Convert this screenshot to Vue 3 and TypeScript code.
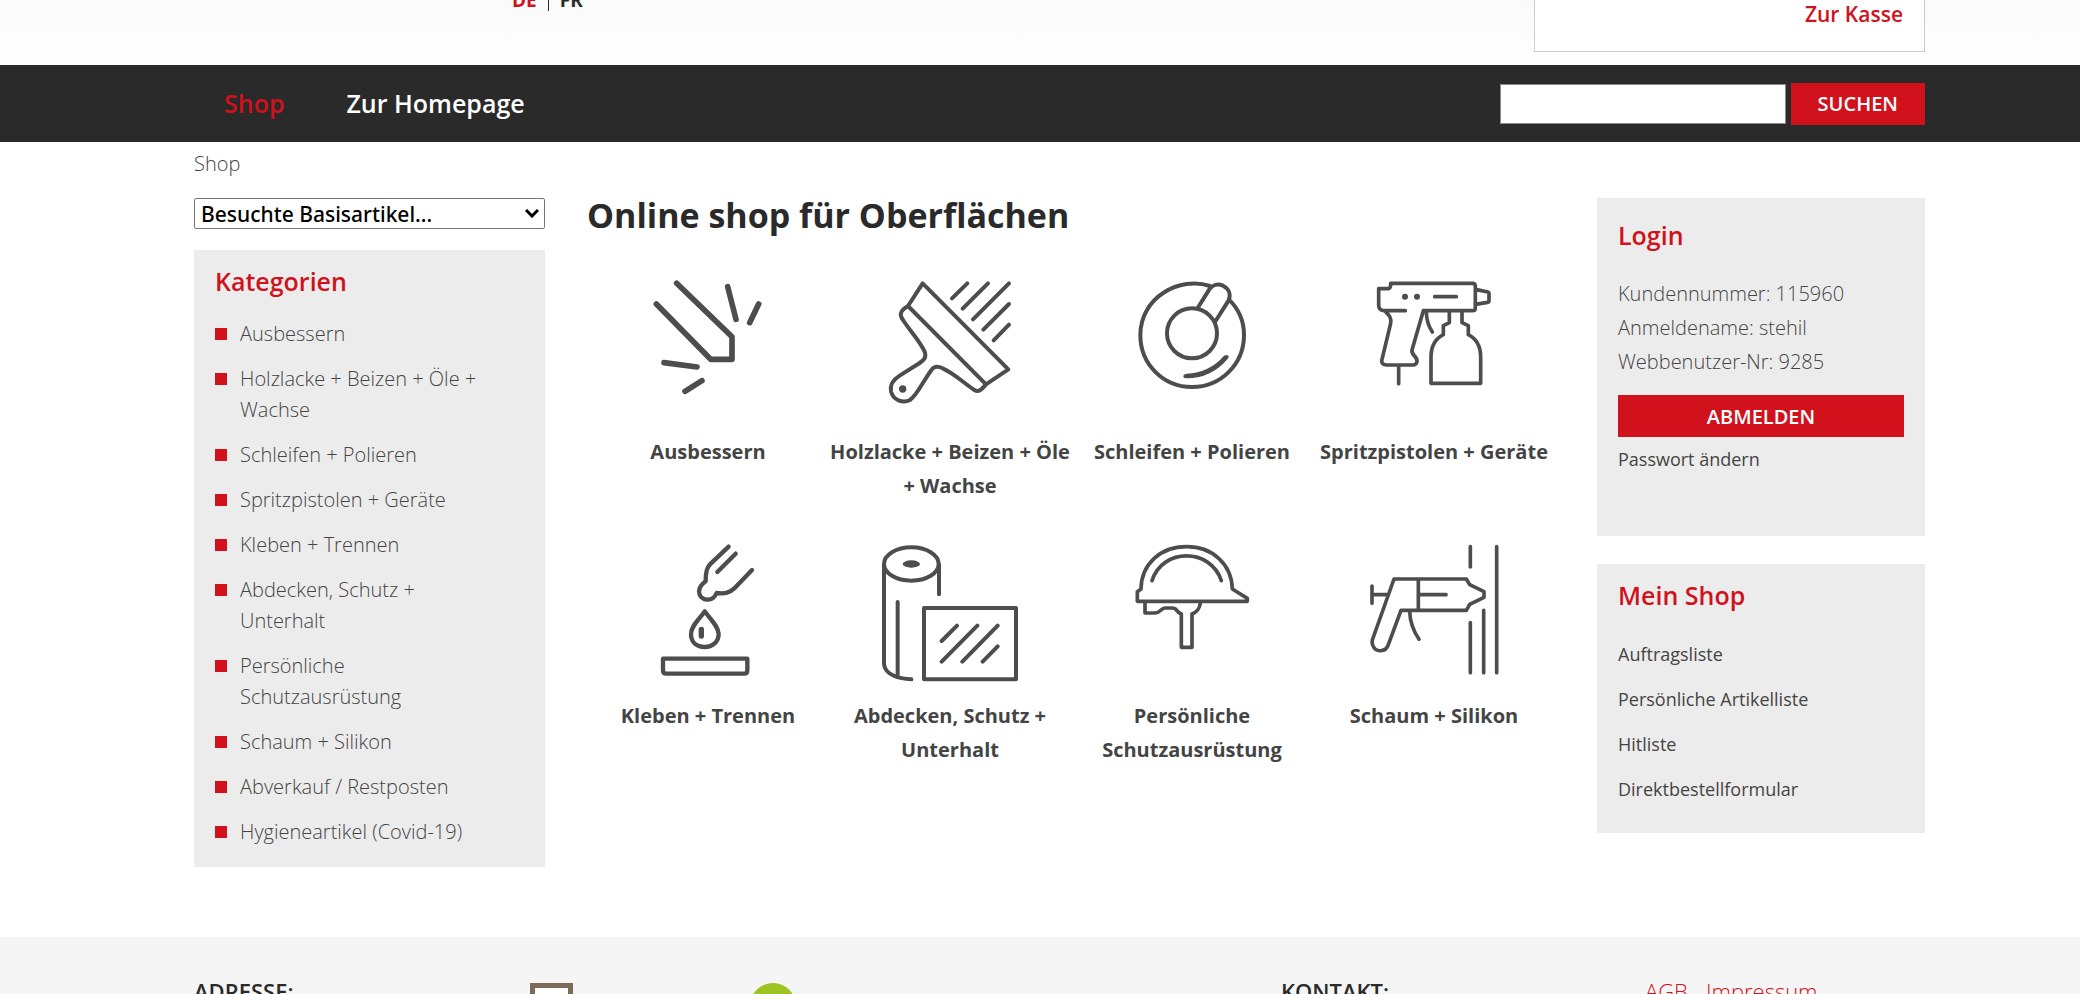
<script setup lang="ts">
import { ref } from 'vue'

interface Category {
  name: string
  viewBox?: string
  width?: number
  lines?: string
  dots?: string
}

const search = ref('')
const visited = ref('')

const categories: Category[] = [
  {
    name: 'Ausbessern',
    viewBox: '168 261 432 432',
    width: 17,
    lines:
      'M290 280L456 440V508H392L229 342M443 290L468 388M536 342L509 398M252 518L351 531M366 572L315 604',
  },
  {
    name: 'Holzlacke + Beizen + Öle + Wachse',
    viewBox: '893 261 432 432',
    width: 12,
    lines:
      'M1027 280L1284 538L1217 583L983 348ZM983 348C964 360 954 370 968 390C990 424 1018 452 1033 485C1039 502 1032 509 1018 519L958 557C934 572 929 588 932 604C938 630 967 641 989 630C1012 614 1030 570 1054 539C1062 528 1075 529 1087 535C1120 549 1150 579 1182 600C1196 609 1206 596 1217 583M1161 280L1115 325M1223 280L1147 356M1286 280L1178 388M1286 342L1209 419M1286 404L1240 451',
    dots: 'M956 597a11 11 0 1 0 22 0a11 11 0 1 0-22 0',
  },
  {
    name: 'Schleifen + Polieren',
    viewBox: '120 51 432 432',
    width: 12,
    lines:
      'M390 78C300 48 181 111 181 225C181 312 249 381 336 381C423 381 492 312 492 225C492 183 477 148 447 119M261 220a75 75 0 1 0 150 0a75 75 0 1 0-150 0M353 144L388 88C397 75 413 70 429 77C447 86 453 103 446 121L405 186M316 349C363 350 407 331 440 291M320 347C364 345 404 329 436 292',
  },
  {
    name: 'Spritzpistolen + Geräte',
    viewBox: '846 51 432 432',
    width: 11,
    lines:
      'M976 152H911Q896 151 896 136V86H925Q933 84 932 70H1178Q1186 70 1186 79V145Q1186 152 1178 152H1030L996 270C993 287 1013 288 1011 305Q1009 315 999 315H918Q902 313 906 298L932 190C936 172 924 163 915 153M1186 88L1224 96Q1227 97 1227 100V122Q1227 126 1223 127L1186 133M1064 110H1129M1039 155C1039 178 1046 199 1057 216M956 315V371M1108 154V188L1090 197V224C1065 237 1053 258 1053 291V370H1202V291C1202 258 1190 237 1165 224V197L1146 188V154',
    dots: 'M966 110a9 9 0 1 0 18 0a9 9 0 1 0-18 0M1002 110a9 9 0 1 0 18 0a9 9 0 1 0-18 0',
  },
  {
    name: 'Kleben + Trennen',
    viewBox: '108 63 432 432',
    width: 13,
    lines:
      'M386 80L329 134Q316 148 317 184C306 192 297 201 297 215C299 243 337 249 350 219C373 222 387 220 402 206L456 150M407 101L352 156M314 274C298 299 272 318 273 344C274 368 291 381 314 381C338 381 356 365 356 342C355 318 332 299 314 274ZM189 416H442V451Q442 461 433 461H199Q189 461 189 451Z',
    dots: 'M296 328a8 8 0 0 1 16 0V348a8 8 0 0 1-16 0Z',
  },
  {
    name: 'Abdecken, Schutz + Unterhalt',
    viewBox: '833 63 432 432',
    width: 12,
    lines:
      'M851 132a82 50 0 1 0 164 0a82 50 0 1 0-164 0M851 132V432C853 464 897 477 933 478M892 246V466M1016 132V223M971 264H1247V478H971ZM1070 317L1024 363M1131 317L1024 425M1192 317L1086 425M1192 379L1147 425',
    dots: 'M907 132a26 11 0 1 0 52 0a26 11 0 1 0-52 0',
  },
  {
    name: 'Persönliche Schutzausrüstung',
    viewBox: '120 63 432 432',
    width: 11,
    lines:
      'M172 244V215L183 207C184 133 240 80 320 80C398 80 455 133 457 207L502 235V244ZM216 182C247 83 392 83 424 182M195 246V279H225C242 279 242 264 255 264H276C294 264 283 273 304 282V382H336V282C354 274 359 265 361 249',
  },
  {
    name: 'Schaum + Silikon',
    viewBox: '846 63 432 432',
    width: 11,
    lines:
      'M942 177H1159L1169 194L1212 215V232L1169 253L1159 271H963L925 374C918 396 887 400 878 375Q875 368 877 360ZM1015 177V271M1015 224H1098M876 198V250M876 224H924M989 273Q990 318 1017 358M1171 80V141M1250 80V458M1171 308V458M1211 271V458',
  },
  { name: 'Abverkauf / Restposten' },
  { name: 'Hygieneartikel (Covid-19)' },
]

const tiles = categories.filter((category) => category.lines)
const account = ['Kundennummer: 115960', 'Anmeldename: stehil', 'Webbenutzer-Nr: 9285']
const shopLinks = ['Auftragsliste', 'Persönliche Artikelliste', 'Hitliste', 'Direktbestellformular']
</script>

<template>
  <div class="page">
    <header class="top wrap">
      <div class="languages"><a href="#" class="active">DE</a><span class="divider"></span><a href="#">FR</a></div>
      <div class="basket"><a href="#">Zur Kasse</a></div>
    </header>

    <div class="bar wrap">
      <nav class="menu">
        <a href="#" class="current">Shop</a>
        <a href="#">Zur Homepage</a>
      </nav>
      <form class="search" @submit.prevent>
        <input v-model="search" type="text" aria-label="Suchbegriff" />
        <button type="submit" class="action">SUCHEN</button>
      </form>
    </div>

    <div class="content wrap">
      <div class="crumbs"><a href="#">Shop</a></div>
      <div class="columns">
        <aside>
          <div class="visited">
            <select v-model="visited" aria-label="Besuchte Basisartikel">
              <option value="">Besuchte Basisartikel...</option>
            </select>
            <svg viewBox="0 0 14 9" aria-hidden="true"><path d="M1 1L7 7L13 1" /></svg>
          </div>
          <section class="panel categories">
            <h2>Kategorien</h2>
            <ul>
              <li v-for="category in categories" :key="category.name"><a href="#">{{ category.name }}</a></li>
            </ul>
          </section>
        </aside>

        <main>
          <h1>Online shop für Oberflächen</h1>
          <div class="tiles">
            <a v-for="tile in tiles" :key="tile.name" href="#" class="tile">
              <svg :viewBox="tile.viewBox" aria-hidden="true">
                <path class="lines" :d="tile.lines" :stroke-width="tile.width" />
                <path v-if="tile.dots" class="dots" :d="tile.dots" />
              </svg>
              <span>{{ tile.name }}</span>
            </a>
          </div>
        </main>

        <aside class="side">
          <section class="panel login">
            <h2>Login</h2>
            <p v-for="line in account" :key="line">{{ line }}</p>
            <button type="button" class="action">ABMELDEN</button>
            <a href="#">Passwort ändern</a>
          </section>
          <section class="panel my-shop">
            <h2>Mein Shop</h2>
            <ul>
              <li v-for="link in shopLinks" :key="link"><a href="#">{{ link }}</a></li>
            </ul>
          </section>
        </aside>
      </div>
    </div>

    <footer class="footer wrap">
      <h3>ADRESSE:</h3>
      <div class="frame"></div>
      <div class="seal"></div>
      <h3>KONTAKT:</h3>
      <div class="legal"><a href="#">AGB</a><a href="#">Impressum</a></div>
    </footer>
  </div>
</template>

<style>
body {
  margin: 0;
  background: #fff;
}
</style>

<style scoped>
.page {
  display: flex;
  flex-direction: column;
  height: 100vh;
  overflow: hidden;
  box-sizing: border-box;
  font-family: 'Open Sans', 'Noto Sans', sans-serif;
  font-size: 20px;
  font-weight: 300;
  line-height: 31px;
  color: #444;
}
.page > * {
  flex-shrink: 0;
}
.wrap {
  padding-left: 194px;
  padding-right: 155px;
}
a {
  color: inherit;
  text-decoration: none;
}
h1,
h2,
h3,
p,
ul {
  margin: 0;
  padding: 0;
}
ul {
  list-style: none;
}
.top {
  display: flex;
  justify-content: space-between;
  align-items: flex-end;
  height: 65px;
  background: linear-gradient(#fafafa, #fefefe);
}
.languages {
  display: flex;
  align-items: center;
  gap: 11px;
  padding-left: 318px;
  padding-bottom: 49px;
  font-size: 19px;
  font-weight: 700;
  color: #2a2a2a;
}
.languages .active {
  color: #d1111b;
}
.divider {
  width: 1px;
  height: 21px;
  background: #2a2a2a;
}
.basket {
  box-sizing: border-box;
  width: 391px;
  margin-bottom: 13px;
  padding: 0 21px 22px;
  border: 1px solid #ccc;
  border-top: 0;
  background: #fff;
  text-align: right;
  font-size: 21px;
  font-weight: 600;
  line-height: 30px;
  color: #d1111b;
}
.bar {
  display: flex;
  justify-content: space-between;
  align-items: center;
  height: 77px;
  background: #2a2a2a;
}
.menu {
  display: flex;
  gap: 62px;
  padding-left: 30px;
  font-size: 25px;
  font-weight: 600;
  color: #fff;
}
.current {
  color: #d1111b;
}
.search {
  display: flex;
  align-items: center;
  gap: 5px;
}
.search input {
  box-sizing: border-box;
  width: 286px;
  height: 40px;
  padding: 0 8px;
  border: 1px solid #8a8a8a;
  background: #fff;
  font: inherit;
}
.action {
  height: 42px;
  padding: 0 27px;
  border: 0;
  background: #d1111b;
  font-family: inherit;
  font-size: 20px;
  font-weight: 600;
  color: #fff;
}
.crumbs {
  padding: 6px 0 19px;
}
.columns {
  display: grid;
  grid-template-columns: 351px minmax(0, 1fr) 328px;
  gap: 42px;
  align-items: start;
}
.visited {
  position: relative;
  margin-bottom: 21px;
}
.visited select {
  display: block;
  box-sizing: border-box;
  width: 100%;
  height: 31px;
  padding: 0 30px 0 6px;
  appearance: none;
  border: 1px solid #767676;
  border-radius: 2px;
  background: #fff;
  font-family: 'Noto Sans', sans-serif;
  font-size: 21px;
  font-weight: 500;
  line-height: 28px;
  color: #000;
}
.visited svg {
  position: absolute;
  top: 11px;
  right: 6px;
  width: 14px;
  height: 9px;
  fill: none;
  stroke: #000;
  stroke-width: 3;
  pointer-events: none;
}
.panel {
  padding: 21px;
  background: #ececec;
}
h2 {
  font-size: 25px;
  font-weight: 600;
  line-height: 32px;
  color: #d1111b;
}
.categories {
  padding: 15px 60px 20px 21px;
}
.categories ul {
  display: grid;
  gap: 14px;
  margin-top: 21px;
}
.categories li {
  display: flex;
  gap: 13px;
}
.categories li::before {
  content: '';
  flex: none;
  width: 12px;
  height: 12px;
  margin-top: 10px;
  background: #d1111b;
}
h1 {
  font-size: 34px;
  font-weight: 700;
  line-height: 34px;
  color: #2a2a2a;
}
.tiles {
  display: grid;
  grid-template-columns: repeat(4, minmax(0, 1fr));
  row-gap: 38px;
  margin-top: 45px;
}
.tile {
  display: flex;
  flex-direction: column;
  align-items: center;
  gap: 14px;
  min-height: 226px;
  text-align: center;
  font-weight: 700;
  line-height: 34px;
}
.tile svg {
  width: 144px;
  height: 144px;
}
.lines {
  fill: none;
  stroke: #4d4d4d;
  stroke-linecap: round;
  stroke-linejoin: round;
}
.dots {
  fill: #4d4d4d;
}
.side {
  display: grid;
  gap: 28px;
}
.login h2 {
  margin-bottom: 26px;
}
.login p {
  line-height: 34px;
}
.login .action {
  display: block;
  width: 100%;
  margin: 16px 0 7px;
}
.login a,
.my-shop a {
  display: block;
  font-size: 18px;
  font-weight: 400;
}
.login {
  padding-bottom: 61px;
}
.my-shop {
  padding-top: 15px;
  padding-bottom: 28px;
}
.my-shop ul {
  display: grid;
  gap: 14px;
  margin-top: 28px;
}
.footer {
  display: grid;
  grid-template-columns: 336fr 220fr 531fr 364fr 280fr;
  align-items: start;
  margin-top: 70px;
  padding-top: 46px;
  background: #f5f5f5;
}
h3 {
  margin-top: -7px;
  font-size: 22px;
  font-weight: 600;
  color: #2a2a2a;
}
.frame {
  box-sizing: border-box;
  width: 43px;
  height: 43px;
  border: 5px solid #7d6b5a;
  background: #fff;
}
.seal {
  width: 46px;
  height: 46px;
  border-radius: 50%;
  background: #9dc423;
}
.legal {
  display: flex;
  gap: 18px;
  margin-top: -7px;
  font-size: 22px;
  color: #d1111b;
}
</style>
